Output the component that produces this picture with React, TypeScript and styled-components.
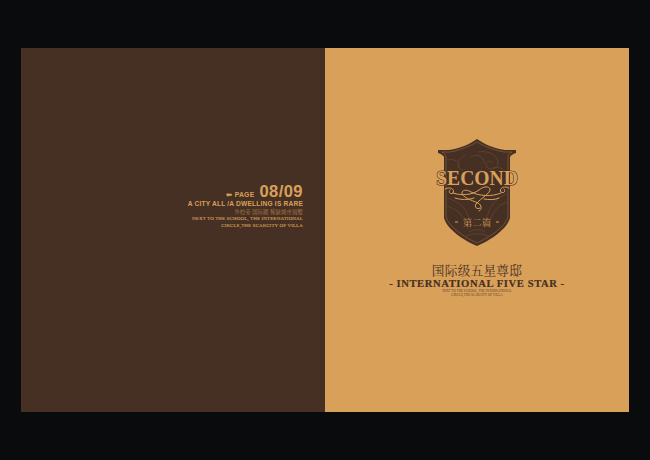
import React from "react";
import styled, { createGlobalStyle } from "styled-components";

const Global = createGlobalStyle`
  html, body { margin: 0; padding: 0; background: #0a0b0d; }
  #root { width: 650px; height: 460px; overflow: hidden; }
`;
const serif = `"Liberation Serif", "Noto Serif CJK SC", "Noto Sans CJK SC", serif`;
const sans = `"Liberation Sans", Arial, sans-serif`;

const Backdrop = styled.div`
  width: 650px; height: 460px; box-sizing: border-box; padding: 48px 21px;
  background-color: #0a0b0d;
`;
const Spread = styled.div`display: flex; width: 608px; height: 364px;`;
const LeftPage = styled.section`
  width: 304px; box-sizing: border-box; background: #463024;
  padding: 135px 22px 0 0; display: flex; flex-direction: column; align-items: flex-end;
  color: #d9a059;
`;
const RightPage = styled.section`
  width: 304px; box-sizing: border-box; background: #d9a059;
  padding: 90px 0 0; display: flex; flex-direction: column; align-items: center;
  color: #463024;
`;
const PageLine = styled.div`
  display: flex; align-items: baseline; gap: 5px; height: 16px; font-family: ${sans}; font-weight: 700;
`;
const PageLabel = styled.span`font-size: 6.8px; letter-spacing: .25px;`;
const PageNumber = styled.span`font-size: 16.5px; line-height: 17px; letter-spacing: .45px;`;
const Headline = styled.div`
  font-family: ${sans}; font-weight: 700; font-size: 6.6px; line-height: 9px; letter-spacing: .2px;
`;
const ChineseLine = styled.div`
  font-family: ${serif}; font-size: 5.4px; line-height: 8px; opacity: .7; letter-spacing: .1px;
`;
const SmallCaps = styled.div`
  font-family: ${serif}; font-size: 5px; line-height: 6.5px; text-align: right; letter-spacing: .12px;
  -webkit-text-stroke: .1px #d9a059;
`;
const Crest = styled.svg`display: block; width: 88px; height: 110px; overflow: visible;`;
const Title = styled.h1`
  margin: 16px 0 0; font-family: ${serif}; font-weight: 400; font-size: 12.6px; line-height: 14px; letter-spacing: .3px;
`;
const Subtitle = styled.h2`
  display: flex; gap: 3px; margin: 0; font-family: ${serif}; font-weight: 700; font-size: 10.6px; line-height: 12px; letter-spacing: .6px; white-space: nowrap;
  -webkit-text-stroke: .2px #463024;
`;
const Fine = styled.div`
  font-family: ${serif}; font-size: 3.2px; line-height: 4.2px; text-align: center; margin-top: -1px; letter-spacing: .05px; opacity: .85;
`;

const shield = "M44 1 C51 6 60 10 72 12 L83 12 L83 15 C80 16 78 17 77 19 L77 80 C74 91 58 102 44 108 C30 102 14 91 11 80 L11 19 C10 17 8 16 5 15 L5 12 L16 12 C28 10 37 6 44 1 Z";
const inner = "M44 4 C51 8 60 12 71 14 L79 14 C77 15 75 17 75 19 L75 79 C72 89 57 99 44 105 C31 99 16 89 13 79 L13 19 C13 17 11 15 9 14 L17 14 C28 12 37 8 44 4 Z";

const Shield = () => (
  <Crest viewBox="0 0 88 110" aria-label="Second crest">
    <path d={shield} fill="#463024" />
    <path d={inner} fill="none" stroke="#8e6843" strokeWidth=".6" />
    <g fill="none" stroke="#654733" strokeWidth=".7">
      <path d="M45 14 c10 -2 20 3 20 11 c0 7 -11 8 -12 2 c0 -4 6 -5 7 -2" />
      <path d="M38 19 c6 -4 14 0 13 7 M32 17 c-8 4 -10 14 -2 15" />
      <path d="M14 22 c8 -2 13 2 12 8 M60 30 c8 -2 12 2 14 7" />
      <path d="M14 60 c14 4 22 12 24 30 M14 68 c10 3 17 9 21 23 M74 56 c-12 4 -20 14 -22 34 M74 64 c-9 3 -16 10 -18 25" />
      <path d="M36 94 c5 -3 12 -3 16 0 M33 98 c7 -3 15 -3 22 0" />
    </g>
    <text transform="translate(44 47) scale(1 1.12)" textAnchor="middle" fontFamily={serif} fontWeight="700" fontSize="19.6" fill="#d9a059" stroke="#463024" strokeWidth="1.1" paintOrder="stroke">SECOND</text>
    <g fill="none" stroke="#d9a059" strokeWidth="1" strokeLinecap="round">
      <path d="M12 51 c6 -3 10 1 8 4 c-3 2 -5 -1 -3 -3 M20 55 c9 3 19 2 26 -3 c5 -4 10 -4 11 -1 c1 4 -9 9 -14 15 c-2 3 1 6 4 4" />
      <path d="M76 50 c-6 -3 -10 1 -8 4 c3 2 5 -1 3 -3 M68 55 c-9 4 -22 3 -30 -1 c-5 -3 -9 -2 -9 1 c0 4 9 7 16 10 c4 2 4 7 1 8" />
      <path d="M22 60 c6 2 13 2 19 0 M66 60 c-4 2 -10 2 -15 1" />
    </g>
    <text x="44" y="87.5" textAnchor="middle" fontFamily={serif} fontSize="9.5" fill="#d9a059" opacity=".9">第二篇</text>
    <path d="M22 84 h3 M63 84 h3" stroke="#d9a059" strokeWidth="1.2" />
  </Crest>
);

export default function App() {
  return (
    <>
      <Global />
      <Backdrop>
        <Spread>
          <LeftPage>
            <PageLine>
              <PageLabel>⬅ PAGE</PageLabel>
              <PageNumber>08/09</PageNumber>
            </PageLine>
            <Headline>A CITY ALL /A DWELLING IS RARE</Headline>
            <ChineseLine>外校旁 国际圈 稀缺城市别墅</ChineseLine>
            <SmallCaps>
              NEXT TO THE SCHOOL, THE INTERNATIONAL
              <br />
              CIRCLE,THE SCARCITY OF VILLA
            </SmallCaps>
          </LeftPage>
          <RightPage>
            <Shield />
            <Title>国际级五星尊邸</Title>
            <Subtitle>
              <span>-</span>
              <span>INTERNATIONAL FIVE STAR</span>
              <span>-</span>
            </Subtitle>
            <Fine>
              NEXT TO THE SCHOOL, THE INTERNATIONAL
              <br />
              CIRCLE,THE SCARCITY OF VILLA
            </Fine>
          </RightPage>
        </Spread>
      </Backdrop>
    </>
  );
}
